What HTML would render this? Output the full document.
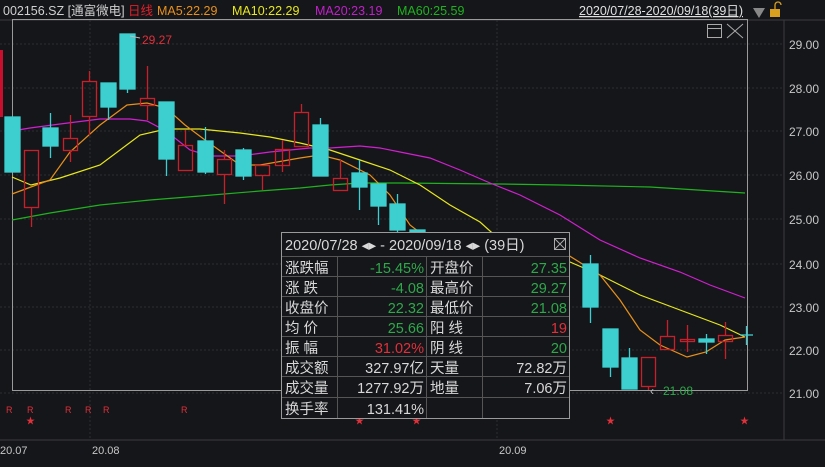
<!DOCTYPE html><html><head><meta charset="utf-8"><style>
body{margin:0;background:#15161a;width:825px;height:462px;overflow:hidden;font-family:"Liberation Sans","Noto Sans CJK SC",sans-serif}
svg text{font-family:"Liberation Sans","Noto Sans CJK SC",sans-serif}
</style></head><body>
<svg width="825" height="462" xmlns="http://www.w3.org/2000/svg">
<rect width="825" height="462" fill="#15161a"/>
<g stroke="#2c2d33" stroke-width="1" stroke-dasharray="2,2">
<line x1="0" y1="44" x2="784" y2="44"/><line x1="0" y1="88" x2="784" y2="88"/><line x1="0" y1="131" x2="784" y2="131"/><line x1="0" y1="175" x2="784" y2="175"/><line x1="0" y1="219" x2="784" y2="219"/><line x1="0" y1="264" x2="784" y2="264"/><line x1="0" y1="307" x2="784" y2="307"/><line x1="0" y1="350" x2="784" y2="350"/><line x1="0" y1="393" x2="784" y2="393"/>
<line x1="90" y1="20" x2="90" y2="440"/><line x1="497" y1="20" x2="497" y2="440"/>
</g>
<line x1="0" y1="20" x2="825" y2="20" stroke="#3a3b40"/>
<line x1="784" y1="20" x2="784" y2="440" stroke="#3a3b40"/>
<line x1="0" y1="440" x2="825" y2="440" stroke="#3a3b40"/>
<rect x="0" y="50" width="3" height="67" fill="#c8102e"/>
<rect x="12.5" y="19.5" width="735" height="371" fill="none" stroke="#9a9a9a"/>
<polyline fill="none" stroke="#1fb21f" stroke-width="1.2" points="12,220 50,213 100,205 150,200 200,196 260,191 300,188 330,185 360,183 400,183 500,184 560,185 650,187 745,193"/>
<polyline fill="none" stroke="#d21fd2" stroke-width="1.2" points="12,131 30,128 60,124 100,119 130,119 147,121 166,131 190,150 210,156 240,156 270,152 290,150 310,148 330,148 360,146 380,148 400,152 430,158 460,170 490,183 520,195 560,215 600,240 640,258 680,272 710,285 745,298"/>
<polyline fill="none" stroke="#e8e81a" stroke-width="1.2" points="12,177 31,185 60,178 100,165 140,135 166,129 200,129 240,133 270,137 300,143 330,150 360,160 390,170 420,185 450,205 480,222 500,240 540,252 570,262 600,275 640,295 680,310 720,325 745,337"/>
<polyline fill="none" stroke="#e8901a" stroke-width="1.2" points="12,194 50,180 70,152 100,125 127,105 147,103 166,108 185,125 205,140 240,165 260,165 300,158 320,155 340,160 370,175 390,195 410,225 440,248 560,250 600,275 620,300 640,330 660,345 687,357 706,352 725,340 745,337"/>
<g stroke-width="1.3">
<g fill="#3dcfd0" stroke="#3dcfd0">
<rect x="5" y="117" width="15" height="55"/>
<rect x="43" y="128" width="15" height="18"/><line x1="50.5" y1="113" x2="50.5" y2="158"/>
<rect x="101" y="83" width="15" height="24"/><line x1="108.5" y1="107" x2="108.5" y2="120"/>
<rect x="120" y="34" width="15" height="55"/><line x1="127.5" y1="89" x2="127.5" y2="93"/>
<rect x="159" y="102" width="15" height="57"/><line x1="166.5" y1="159" x2="166.5" y2="176"/>
<rect x="198" y="141" width="15" height="31"/><line x1="205.5" y1="127" x2="205.5" y2="174"/>
<rect x="236" y="150" width="15" height="26"/><line x1="243.5" y1="148" x2="243.5" y2="180"/>
<rect x="313" y="125" width="15" height="51"/><line x1="320.5" y1="118" x2="320.5" y2="125"/>
<rect x="352" y="173" width="15" height="14"/><line x1="359.5" y1="160" x2="359.5" y2="210"/>
<rect x="371" y="184" width="15" height="22"/><line x1="378.5" y1="206" x2="378.5" y2="225"/>
<rect x="390" y="204" width="15" height="26"/><line x1="397.5" y1="194" x2="397.5" y2="232"/>
<rect x="410" y="230" width="15" height="3"/>
<rect x="583" y="264" width="15" height="43"/><line x1="590.5" y1="255" x2="590.5" y2="323"/>
<rect x="603" y="329" width="15" height="38"/><line x1="610.5" y1="367" x2="610.5" y2="377"/>
<rect x="622" y="358" width="15" height="31"/><line x1="629.5" y1="348" x2="629.5" y2="358"/>
<rect x="699" y="339" width="15" height="3"/><line x1="706.5" y1="334" x2="706.5" y2="354"/>
<line x1="740" y1="335" x2="753" y2="335"/><line x1="746.5" y1="326" x2="746.5" y2="345"/>
</g>
<g fill="none" stroke="#c8202a">
<rect x="24.5" y="150.5" width="14" height="57"/><line x1="31.5" y1="208" x2="31.5" y2="227"/>
<rect x="63.5" y="138.5" width="14" height="12"/><line x1="70.5" y1="115" x2="70.5" y2="138"/><line x1="70.5" y1="151" x2="70.5" y2="162"/>
<rect x="82.5" y="81.5" width="14" height="35"/><line x1="89.5" y1="71" x2="89.5" y2="81"/><line x1="89.5" y1="117" x2="89.5" y2="135"/>
<rect x="140.5" y="98.5" width="14" height="7"/><line x1="147.5" y1="66" x2="147.5" y2="98"/><line x1="147.5" y1="106" x2="147.5" y2="120"/>
<rect x="178.5" y="145.5" width="14" height="25"/><line x1="185.5" y1="130" x2="185.5" y2="145"/>
<rect x="217.5" y="159.5" width="14" height="15"/><line x1="224.5" y1="150" x2="224.5" y2="159"/><line x1="224.5" y1="175" x2="224.5" y2="204"/>
<rect x="255.5" y="165.5" width="14" height="10"/><line x1="262.5" y1="176" x2="262.5" y2="190"/>
<rect x="275.5" y="149.5" width="14" height="16"/><line x1="282.5" y1="140" x2="282.5" y2="172"/>
<rect x="294.5" y="112.5" width="14" height="34"/><line x1="301.5" y1="104" x2="301.5" y2="112"/>
<rect x="333.5" y="178.5" width="14" height="12"/><line x1="340.5" y1="160" x2="340.5" y2="178"/>
<rect x="641.5" y="357.5" width="14" height="29"/><line x1="648.5" y1="387" x2="648.5" y2="390"/>
<rect x="660.5" y="336.5" width="14" height="13"/><line x1="667.5" y1="320" x2="667.5" y2="336"/>
<rect x="680.5" y="339.5" width="14" height="2"/><line x1="687.5" y1="325" x2="687.5" y2="352"/>
<rect x="718.5" y="335.5" width="14" height="6"/><line x1="725.5" y1="322" x2="725.5" y2="335"/><line x1="725.5" y1="342" x2="725.5" y2="359"/>
</g></g>
<text x="142" y="44" fill="#e0303a" font-size="12">29.27</text>
<line x1="130" y1="36" x2="140" y2="38" stroke="#bbb"/>
<text x="663" y="395" fill="#2fa84a" font-size="12">21.08</text>
<text x="650" y="395" fill="#bbb" font-size="12">‹</text>
<g fill="#c8c8c8" font-size="12">
<text x="789" y="49">29.00</text><text x="789" y="93">28.00</text><text x="789" y="136">27.00</text><text x="789" y="180">26.00</text><text x="789" y="224">25.00</text><text x="789" y="269">24.00</text><text x="789" y="312">23.00</text><text x="789" y="355">22.00</text><text x="789" y="398">21.00</text>
<text x="0" y="454" font-size="11">20.07</text><text x="92" y="454" font-size="11">20.08</text><text x="499" y="454" font-size="11">20.09</text>
</g>
<g fill="#e0303a" font-size="9"><text x="6" y="413">R</text><text x="27" y="413">R</text><text x="65" y="413">R</text><text x="85" y="413">R</text><text x="103" y="413">R</text><text x="181" y="413">R</text>
<text x="26" y="424">★</text><text x="355" y="424">★</text><text x="412" y="424">★</text><text x="606" y="424">★</text><text x="740" y="424">★</text></g>
<g font-size="12.5">
<text x="3" y="15" fill="#d0d0d0">002156.SZ [通富微电]</text>
<text x="128" y="15" fill="#e0202a">日线</text>
<text x="157" y="15" fill="#e8901a">MA5:22.29</text>
<text x="232" y="15" fill="#e8e81a">MA10:22.29</text>
<text x="315" y="15" fill="#c020c8">MA20:23.19</text>
<text x="397" y="15" fill="#1fb21f">MA60:25.59</text>
<text x="579" y="15" fill="#e0e0e0" text-decoration="underline">2020/07/28-2020/09/18(39日)</text>
</g>
<path d="M753 8 L765 8 L759 18 Z" fill="#888"/>
<rect x="770" y="9" width="10" height="8" fill="#d9a020"/><path d="M775 9 v-4 a3 3 0 0 1 6 0" fill="none" stroke="#d9a020" stroke-width="1.3"/>
<rect x="707.5" y="24.5" width="14" height="13" fill="none" stroke="#aaa"/><line x1="707" y1="28.5" x2="722" y2="28.5" stroke="#aaa"/>
<path d="M727 24 L743 38 M743 24 L727 38" stroke="#aaa"/>
<rect x="281.5" y="232.5" width="288" height="186" fill="#15161a" stroke="#9a9a9a"/>
<g stroke="#555"><line x1="282" y1="256.5" x2="569" y2="256.5"/>
<line x1="282" y1="276.5" x2="569" y2="276.5"/><line x1="282" y1="296.5" x2="569" y2="296.5"/><line x1="282" y1="316.5" x2="569" y2="316.5"/><line x1="282" y1="336.5" x2="569" y2="336.5"/><line x1="282" y1="356.5" x2="569" y2="356.5"/><line x1="282" y1="376.5" x2="569" y2="376.5"/><line x1="282" y1="397.5" x2="569" y2="397.5"/>
<line x1="337.5" y1="256" x2="337.5" y2="418"/><line x1="426.5" y1="256" x2="426.5" y2="418"/><line x1="482.5" y1="256" x2="482.5" y2="418"/></g>
<g font-size="14.5" fill="#d8d8d8">
<text x="285" y="250">2020/07/28 ◂▸ - 2020/09/18 ◂▸  (39日)</text>
<rect x="554.5" y="238.5" width="11" height="11" fill="none" stroke="#aaa"/><path d="M555 239 L565 249 M565 239 L555 249" stroke="#aaa"/>
<text x="285" y="273">涨跌幅</text><text x="285" y="293">涨  跌</text><text x="285" y="313">收盘价</text><text x="285" y="333">均  价</text><text x="285" y="353">振  幅</text><text x="285" y="373">成交额</text><text x="285" y="393">成交量</text><text x="285" y="414">换手率</text>
<text x="430" y="273">开盘价</text><text x="430" y="293">最高价</text><text x="430" y="313">最低价</text><text x="430" y="333">阳  线</text><text x="430" y="353">阴  线</text><text x="430" y="373">天量</text><text x="430" y="393">地量</text>
<g text-anchor="end">
<text x="424" y="273" fill="#2fa84a">-15.45%</text><text x="424" y="293" fill="#2fa84a">-4.08</text><text x="424" y="313" fill="#2fa84a">22.32</text><text x="424" y="333" fill="#2fa84a">25.66</text><text x="424" y="353" fill="#e0303a">31.02%</text><text x="424" y="373">327.97亿</text><text x="424" y="393">1277.92万</text><text x="424" y="414">131.41%</text>
<text x="567" y="273" fill="#2fa84a">27.35</text><text x="567" y="293" fill="#2fa84a">29.27</text><text x="567" y="313" fill="#2fa84a">21.08</text><text x="567" y="333" fill="#e0303a">19</text><text x="567" y="353" fill="#2fa84a">20</text><text x="567" y="373">72.82万</text><text x="567" y="393">7.06万</text>
</g></g>
</svg>
</body></html>
